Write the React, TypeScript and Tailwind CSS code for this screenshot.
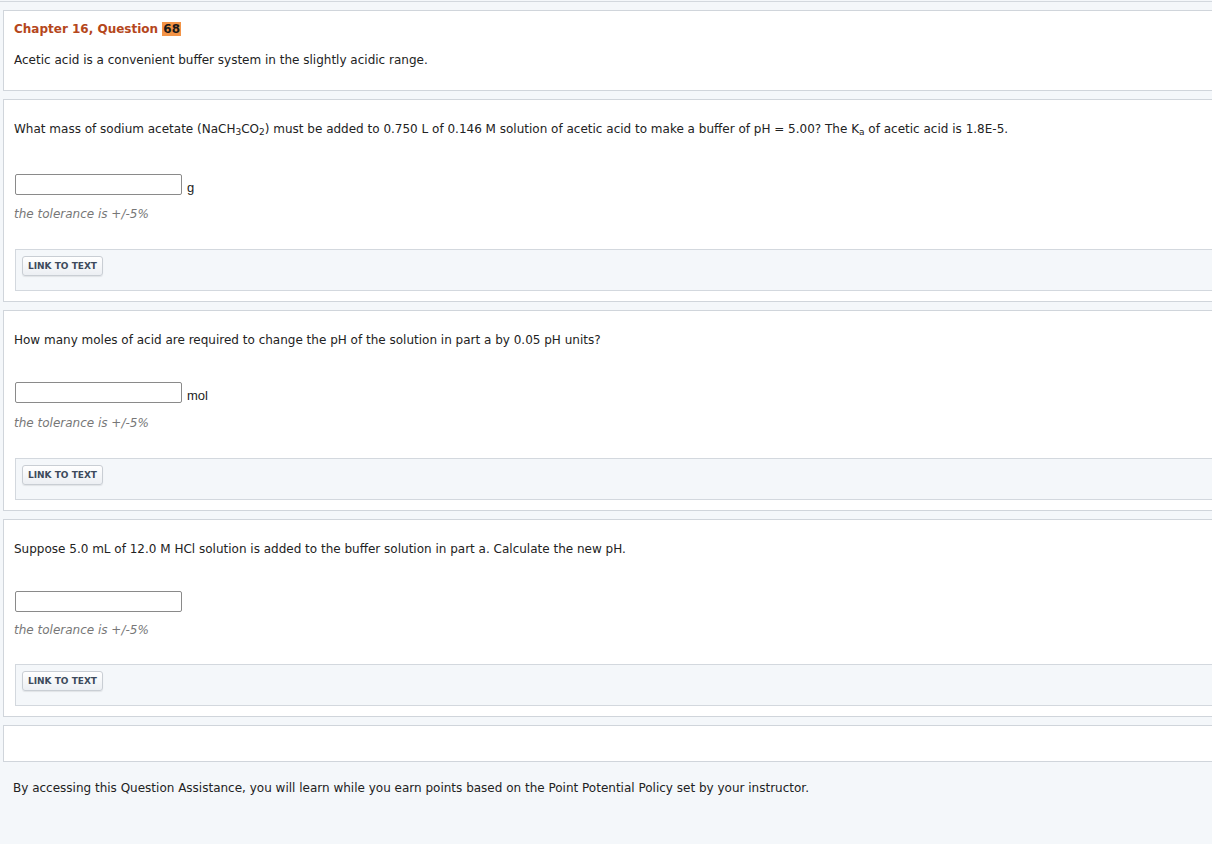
import React from "react";

const font = { fontFamily: '"DejaVu Sans", Verdana, sans-serif' };

function LinkBox() {
  return (
    <div className="ml-[11px] mr-[-20px] h-[42px] border border-[#d3d8de] bg-[#f4f7fa] pt-[6px] pl-[6px]">
      <button className="block h-[20px] px-[5px] rounded-[3px] border border-[#c9ced4] bg-gradient-to-b from-white to-[#eceff3] text-[9px] font-bold text-[#3d4a5c] leading-[18px] shadow-[0_1px_1px_rgba(0,0,0,0.08)]">
        LINK TO TEXT
      </button>
    </div>
  );
}

function Question({
  children,
  unit,
  inputGap,
  tolGap,
  linkGap,
}: {
  children: React.ReactNode;
  unit?: string;
  inputGap: string;
  tolGap: string;
  linkGap: string;
}) {
  return (
    <div className="mt-[8px] ml-[3px] mr-[-20px] border border-[#d0d5db] bg-white pt-[22px] pb-[10px]">
      <div className="pl-[10px] text-[12px] leading-[15px] text-[#222]">{children}</div>
      <div className={`pl-[11px] flex items-end ${inputGap}`}>
        <div className="w-[167px] h-[21px] border border-[#8a8a8a] rounded-[2px] bg-white" />
        {unit && (
          <span
            className="ml-[5px] text-[13px] leading-[15px] text-[#222]"
            style={{ fontFamily: '"Liberation Sans", Arial, sans-serif' }}
          >
            {unit}
          </span>
        )}
      </div>
      <div className={`pl-[10px] text-[12px] leading-[15px] italic text-[#777] ${tolGap}`}>
        the tolerance is +/-5%
      </div>
      <div className={linkGap}>
        <LinkBox />
      </div>
    </div>
  );
}

export default function App() {
  return (
    <div className="w-[1212px] h-[844px] overflow-hidden bg-[#f4f7fa]" style={font}>
      <div className="mt-[1px] border-t border-[#d3d8de]" />
      <div className="mt-[8px] ml-[3px] mr-[-20px] h-[81px] border border-[#d0d5db] bg-white pt-[10px] pl-[10px]">
        <div className="text-[12px] leading-[16px] font-bold text-[#b5471c]">
          Chapter 16, Question{" "}
          <span className="bg-[#f39447] text-[#1a1a1a] px-[1px]">68</span>
        </div>
        <div className="mt-[16px] text-[12px] leading-[15px] text-[#222]">
          Acetic acid is a convenient buffer system in the slightly acidic range.
        </div>
      </div>

      <Question unit="g" inputGap="mt-[37px]" tolGap="mt-[12px]" linkGap="mt-[27px]">
        What mass of sodium acetate (NaCH<sub className="text-[9px]">3</sub>CO
        <sub className="text-[9px]">2</sub>) must be added to 0.750 L of 0.146 M solution of acetic acid to
        make a buffer of pH = 5.00? The K<sub className="text-[9px]">a</sub> of acetic acid is 1.8E-5.
      </Question>

      <Question unit="mol" inputGap="mt-[34px]" tolGap="mt-[13px]" linkGap="mt-[27px]">
        How many moles of acid are required to change the pH of the solution in part a by 0.05 pH units?
      </Question>

      <Question inputGap="mt-[34px]" tolGap="mt-[11px]" linkGap="mt-[26px]">
        Suppose 5.0 mL of 12.0 M HCl solution is added to the buffer solution in part a. Calculate the new pH.
      </Question>

      <div className="mt-[8px] ml-[3px] mr-[-20px] h-[37px] border border-[#d0d5db] bg-white" />

      <div className="mt-[19px] pl-[13px] text-[12px] leading-[15px] text-[#222]">
        By accessing this Question Assistance, you will learn while you earn points based on the Point Potential
        Policy set by your instructor.
      </div>
    </div>
  );
}
